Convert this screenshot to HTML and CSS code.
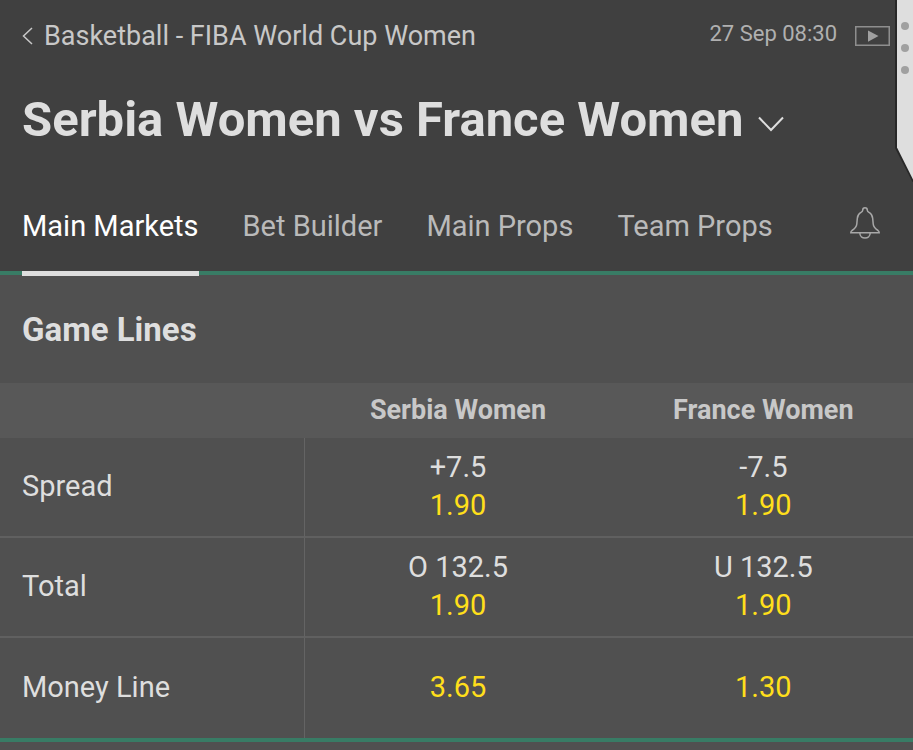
FILE: index.html
```html
<!DOCTYPE html>
<html lang="en">
<head>
<meta charset="utf-8">
<meta name="viewport" content="width=device-width, initial-scale=1">
<title>Serbia Women vs France Women</title>
<link rel="stylesheet" href="styles.css">
</head>
<body>
<header class="event">
  <div class="event-top">
    <a class="breadcrumb" href="#">
      <svg class="back-icon" viewBox="0 0 12 18" aria-hidden="true"><path d="M10 1 1.500 9l8.500 8"/></svg>
      <span>Basketball - FIBA World Cup Women</span>
    </a>
    <time class="event-time" datetime="09-27T08:30">27 Sep 08:30</time>
    <button class="icon-button" type="button" aria-label="Watch stream">
      <svg class="video-icon" viewBox="0 0 35 20" aria-hidden="true"><rect x=".75" y=".75" width="33.500" height="18.500"/><path d="M13 4.500v11.200L23.500 10z"/></svg>
    </button>
  </div>
  <div class="event-title">
    <h1>Serbia Women vs France Women</h1>
    <button class="icon-button" type="button" aria-label="Switch event">
      <svg class="chevron-icon" viewBox="0 0 28 16" aria-hidden="true"><path d="M2 1.500 14 14 26 1.500"/></svg>
    </button>
  </div>
  <nav class="tabs">
    <a class="tab tab-active" href="#" aria-current="page">Main Markets</a>
    <a class="tab" href="#">Bet Builder</a>
    <a class="tab" href="#">Main Props</a>
    <a class="tab" href="#">Team Props</a>
    <button class="icon-button alerts" type="button" aria-label="Alerts">
      <svg class="bell-icon" viewBox="0 0 30 32" aria-hidden="true"><path d="M12.700 3.300C12.700 0 17.300 0 17.300 3.300 17.300 4.600 18.400 5 19.500 5.700 21.500 7 22.500 8.600 22.700 11.500L23.200 17C23.500 20.500 26 22.200 28 23.500 28.800 24.200 29.200 25 29.200 25.700H.8C.8 25 1.200 24.200 2 23.500 4 22.200 6.500 20.500 6.800 17L7.300 11.500C7.500 8.600 8.500 7 10.500 5.700 11.600 5 12.700 4.600 12.700 3.300ZM9.800 26C10 32.800 20 32.800 20.200 26"/></svg>
    </button>
  </nav>
  <svg class="side-panel" viewBox="0 0 18 182" aria-hidden="true">
    <path class="panel-edge" d="M0 0v148l18 35V0z"/>
    <path class="panel-face" d="M2 0v147.500l16 32V0z"/>
    <circle cx="10" cy="26" r="4"/><circle cx="10" cy="48" r="4"/><circle cx="10" cy="70" r="4"/>
  </svg>
</header>
<main class="market">
  <h2>Game Lines</h2>
  <table class="lines">
    <thead>
      <tr><td></td><th scope="col">Serbia Women</th><th scope="col">France Women</th></tr>
    </thead>
    <tbody>
      <tr>
        <th scope="row">Spread</th>
        <td><button class="bet" type="button"><span>+7.5</span><span class="odds">1.90</span></button></td>
        <td><button class="bet" type="button"><span>-7.5</span><span class="odds">1.90</span></button></td>
      </tr>
      <tr>
        <th scope="row">Total</th>
        <td><button class="bet" type="button"><span>O 132.5</span><span class="odds">1.90</span></button></td>
        <td><button class="bet" type="button"><span>U 132.5</span><span class="odds">1.90</span></button></td>
      </tr>
      <tr>
        <th scope="row">Money Line</th>
        <td><button class="bet" type="button"><span class="odds">3.65</span></button></td>
        <td><button class="bet" type="button"><span class="odds">1.30</span></button></td>
      </tr>
    </tbody>
  </table>
</main>
</body>
</html>
```
FILE: styles.css
```css
* { box-sizing: border-box; }

body {
  margin: 0;
  background: #505050;
  color: #dedede;
  font-family: Roboto, "Liberation Sans", sans-serif;
  font-size: 29px;
  line-height: 38px;
}

a { color: inherit; text-decoration: none; }

h1, h2 { margin: 0; font-weight: 700; }

button {
  padding: 0;
  border: 0;
  background: none;
  color: inherit;
  font: inherit;
  cursor: pointer;
}

svg { display: block; fill: none; stroke: currentColor; }

.icon-button { flex: none; }

.event {
  position: relative;
  background: #404040;
  border-bottom: 4px solid #387c65;
}

.event-top {
  display: flex;
  align-items: center;
  height: 72px;
  padding: 0 23px 0 22px;
}

.breadcrumb {
  display: flex;
  align-items: center;
  gap: 10px;
  margin-right: auto;
  color: #c8c8c8;
  font-size: 27px;
}

.back-icon { width: 12px; height: 18px; stroke-width: 1.5; }

.event-time {
  margin-right: 18px;
  padding-bottom: 4px;
  color: #b0b0b0;
  font-size: 22px;
}

.video-icon { width: 35px; height: 20px; color: #8e8e8e; stroke-width: 1.5; }
.video-icon path { fill: #a0a0a0; stroke: none; }

.event-title {
  display: flex;
  align-items: center;
  gap: 14px;
  height: 96px;
  padding: 0 22px;
}

.event-title h1 { font-size: 49px; line-height: 56px; }

.chevron-icon { width: 28px; height: 16px; margin-top: 8px; stroke-width: 2; }

.tabs {
  display: flex;
  align-items: center;
  gap: 44px;
  height: 103px;
  padding: 0 33px 0 22px;
  color: #bababa;
}

.tab {
  display: flex;
  align-items: center;
  height: 100%;
  padding-top: 12px;
  white-space: nowrap;
}

.tab-active { position: relative; color: #fff; }

.tab-active::after {
  content: "";
  position: absolute;
  inset: 100% 0 auto;
  height: 5px;
  background: #dedede;
}

.alerts { margin-left: auto; color: #a8a8a8; }
.bell-icon { width: 30px; height: 32px; margin-top: 7px; stroke-width: 1.5; }

.side-panel {
  position: absolute;
  top: 0;
  right: 0;
  width: 18px;
  height: 182px;
  stroke: none;
}

.panel-edge { fill: #282828; }
.panel-face { fill: #dedede; }
.side-panel circle { fill: #a0a0a0; }

.market {
  overflow: hidden;
  border-bottom: 4px solid #387c65;
}

.market h2 {
  padding: 36px 22px 34px;
  font-size: 33px;
}

/* The last column runs slightly past the right edge of the market. */
.lines {
  width: calc(100% + 3px);
  border-collapse: separate;
  border-spacing: 0;
  table-layout: fixed;
}

.lines thead { background: #585858; }

.lines thead th {
  height: 55px;
  padding: 0 0 2px;
  color: #c8c8c8;
  font-size: 27px;
}

.lines tbody th {
  padding: 0 22px 2px;
  border-right: 1px solid #646464;
  font-weight: 400;
  text-align: left;
}

.lines tbody td { padding: 0; }

.lines tbody tr > * { height: 100px; border-bottom: 2px solid #606060; }
.lines tbody tr:last-child > * { border-bottom: 0; }

.bet {
  display: flex;
  flex-direction: column;
  align-items: center;
  justify-content: center;
  width: 100%;
  height: 98px;
  padding-bottom: 2px;
}

.odds { color: #ffdf1b; }
```
